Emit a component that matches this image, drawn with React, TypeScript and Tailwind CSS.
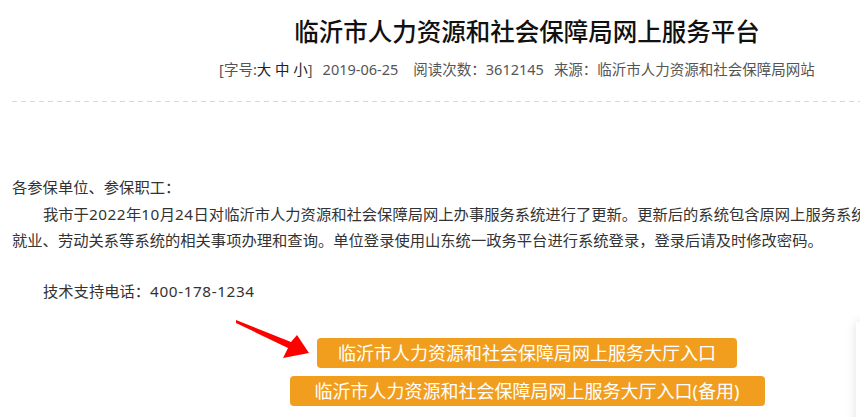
import React from "react";

export default function App() {
  return (
    <div className="relative w-[860px] h-[417px] overflow-hidden bg-white font-['Noto_Sans','Noto_Sans_CJK_SC',sans-serif]">
      <div className="w-[1054px] pl-3">
        <div className="w-[1030px]">
          <h1 className="pt-[16px] h-[48px] text-center text-[24.5px] leading-[32px] font-medium text-[#111]">
            临沂市人力资源和社会保障局网上服务平台
          </h1>
          <div className="mt-[9px] pr-[20px] text-center text-[14.5px] leading-[24px] text-[#555] whitespace-nowrap">
            <span>[字号:</span>
            <span className="text-[#222]">大</span>
            <span> </span>
            <span className="text-[#222]">中</span>
            <span> </span>
            <span className="text-[#222]">小</span>
            <span>]</span>
            <span className="ml-[10px]">2019-06-25</span>
            <span className="ml-[15px]">阅读次数：3612145</span>
            <span className="ml-[10px]">来源：临沂市人力资源和社会保障局网站</span>
          </div>
        </div>
        <div className="mt-[20px] h-px w-[848px] bg-[linear-gradient(to_right,#d8d8d8_60%,transparent_0)] bg-[length:9px_1px]" />
        <div className="mt-[72px] text-[15.3px] leading-[26.5px] text-[#333] whitespace-nowrap">
          <div>各参保单位、参保职工：</div>
          <div className="pl-[31px]">
            我市于<span className="tracking-[0.5px]">2022</span>年<span className="tracking-[0.5px]">10</span>月<span className="tracking-[0.5px]">24</span>日对临沂市人力资源和社会保障局网上办事服务系统进行了更新。更新后的系统包含原网上服务系统中的社会保险、
          </div>
          <div>
            就业、劳动关系等系统的相关事项办理和查询。单位登录使用山东统一政务平台进行系统登录，登录后请及时修改密码。
          </div>
          <div className="mt-[24.5px] pl-[31px]">
            技术支持电话：<span className="tracking-[0.6px]">400-178-1234</span>
          </div>
        </div>
        <div className="mt-[33px] w-[1030px] flex flex-col items-center gap-[8px]">
          <a className="block w-[420px] h-[30px] rounded-[4px] bg-[#f19e1f] text-center text-[18px] leading-[30px] text-white">
            临沂市人力资源和社会保障局网上服务大厅入口
          </a>
          <a className="block w-[475px] h-[30px] rounded-[4px] bg-[#f19e1f] text-center text-[18px] leading-[30px] text-white">
            临沂市人力资源和社会保障局网上服务大厅入口(备用)
          </a>
        </div>
      </div>
      <svg className="absolute left-[230px] top-[315px]" width="85" height="45" viewBox="0 0 85 45">
        <polygon points="6,5 61,27 67,20 79,38 53,43 58,33 6,8" fill="#ff0000" />
      </svg>
      <div className="absolute left-[856px] top-[322px] w-[40px] h-[120px] bg-white shadow-[0_0_10px_rgba(0,0,0,0.12)]" />
    </div>
  );
}
